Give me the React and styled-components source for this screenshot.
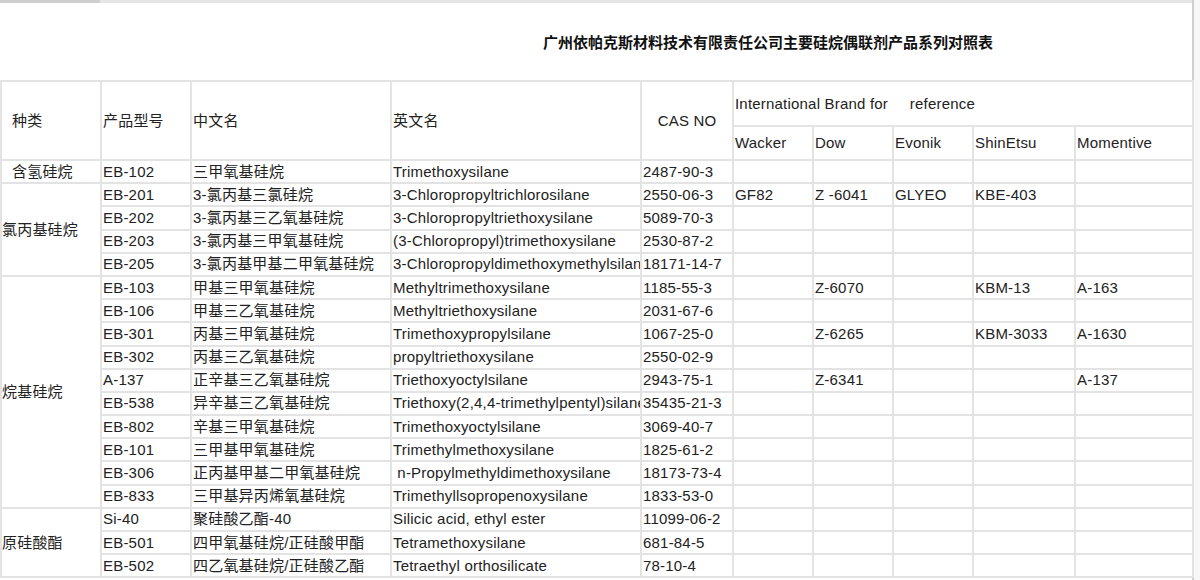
import React from 'react';
import styled, { createGlobalStyle } from 'styled-components';

const Global = createGlobalStyle`
  body { margin: 0; background: #fff; font-family: "Liberation Sans", "Noto Sans CJK SC", sans-serif; }
`;

const line = '#e3e3e3';

const Page = styled.div`
  display: flex;
  width: 1200px;
  height: 580px;
  overflow: hidden;
`;

const Sheet = styled.div`
  width: 1192px;
  border-right: 2px solid #cfcfcf;
  flex: none;
`;

const Filler = styled.div`
  flex: 1;
  background: #f7f7f7;
`;

const TopBar = styled.div`
  height: 3px;
  background: #e6e6e6;
  display: flex;
`;

const Tab = styled.div`
  width: 100px;
  background: #cdcdcd;
`;

const Title = styled.div`
  height: 77px;
  display: flex;
  align-items: center;
  padding-left: 543px;
  font-weight: bold;
  font-size: 15px;
  color: #111;
  box-sizing: border-box;
`;

const Table = styled.table`
  border-collapse: collapse;
  table-layout: fixed;
  width: 1192px;
  font-size: 15px;
  letter-spacing: 0.2px;
  color: #222;
`;

const Cell = styled.td`
  border: 2px solid ${line};
  padding: 0 0 0 ${p => p.$pad ?? 1}px;
  height: ${p => p.$h ?? 21.2}px;
  box-sizing: content-box;
  white-space: nowrap;
  overflow: hidden;
  text-align: ${p => (p.$center ? 'center' : 'left')};
  vertical-align: middle;
  line-height: 18px;
`;

const widths = [100, 90, 200, 250, 92, 80, 80, 80, 102, 118];

const groups = [
  { name: '含氢硅烷', pad: 10, rows: [['EB-102', '三甲氧基硅烷', 'Trimethoxysilane', '2487-90-3']] },
  {
    name: '氯丙基硅烷', pad: 0, rows: [
      ['EB-201', ' 3-氯丙基三氯硅烷', '3-Chloropropyltrichlorosilane', '2550-06-3', 'GF82', 'Z -6041', 'GLYEO', 'KBE-403'],
      ['EB-202', '3-氯丙基三乙氧基硅烷', '3-Chloropropyltriethoxysilane', '5089-70-3'],
      ['EB-203', '3-氯丙基三甲氧基硅烷', '(3-Chloropropyl)trimethoxysilane', '2530-87-2'],
      ['EB-205', '3-氯丙基甲基二甲氧基硅烷', '3-Chloropropyldimethoxymethylsilane', '18171-14-7'],
    ],
  },
  {
    name: '烷基硅烷', pad: 0, rows: [
      ['EB-103', '甲基三甲氧基硅烷', 'Methyltrimethoxysilane', '1185-55-3', '', 'Z-6070', '', 'KBM-13', 'A-163'],
      ['EB-106', '甲基三乙氧基硅烷', 'Methyltriethoxysilane', '2031-67-6'],
      ['EB-301', '丙基三甲氧基硅烷', 'Trimethoxypropylsilane', '1067-25-0', '', 'Z-6265', '', 'KBM-3033', 'A-1630'],
      ['EB-302', '丙基三乙氧基硅烷', 'propyltriethoxysilane', '2550-02-9'],
      ['A-137', '正辛基三乙氧基硅烷', 'Triethoxyoctylsilane', '2943-75-1', '', 'Z-6341', '', '', 'A-137'],
      ['EB-538', '异辛基三乙氧基硅烷', 'Triethoxy(2,4,4-trimethylpentyl)silane', '35435-21-3'],
      ['EB-802', '辛基三甲氧基硅烷', 'Trimethoxyoctylsilane', '3069-40-7'],
      ['EB-101', '三甲基甲氧基硅烷', 'Trimethylmethoxysilane', '1825-61-2'],
      ['EB-306', '正丙基甲基二甲氧基硅烷', '\u00a0n-Propylmethyldimethoxysilane', '18173-73-4'],
      ['EB-833', '三甲基异丙烯氧基硅烷', 'Trimethyllsopropenoxysilane', '1833-53-0'],
    ],
  },
  {
    name: '原硅酸酯', pad: 0, rows: [
      ['Si-40', '聚硅酸乙酯-40', 'Silicic acid, ethyl ester', '11099-06-2'],
      ['EB-501', '四甲氧基硅烷/正硅酸甲酯', 'Tetramethoxysilane', '681-84-5'],
      ['EB-502', '四乙氧基硅烷/正硅酸乙酯', 'Tetraethyl orthosilicate', '78-10-4'],
    ],
  },
];

export default function App() {
  return (
    <Page>
      <Global />
      <Sheet>
        <TopBar><Tab /></TopBar>
        <Title>广州依帕克斯材料技术有限责任公司主要硅烷偶联剂产品系列对照表</Title>
        <Table>
          <colgroup>
            {widths.map((w, i) => <col key={i} style={{ width: w }} />)}
          </colgroup>
          <tbody>
            <tr>
              <Cell rowSpan={2} $pad={10}>种类</Cell>
              <Cell rowSpan={2}>产品型号</Cell>
              <Cell rowSpan={2}>中文名</Cell>
              <Cell rowSpan={2}>英文名</Cell>
              <Cell rowSpan={2} $center $pad={0}>CAS NO</Cell>
              <Cell colSpan={5} $h={43}>International Brand for&nbsp;&nbsp;&nbsp;&nbsp; reference</Cell>
            </tr>
            <tr>
              {['Wacker', 'Dow', 'Evonik', 'ShinEtsu', 'Momentive'].map(b => (
                <Cell key={b} $h={32}>{b}</Cell>
              ))}
            </tr>
            {groups.map(g =>
              g.rows.map((r, i) => (
                <tr key={r[0]}>
                  {i === 0 && <Cell rowSpan={g.rows.length} $pad={g.pad}>{g.name}</Cell>}
                  {Array.from({ length: 9 }, (_, k) => (
                    <Cell key={k}>{r[k] || ''}</Cell>
                  ))}
                </tr>
              ))
            )}
          </tbody>
        </Table>
      </Sheet>
      <Filler />
    </Page>
  );
}
